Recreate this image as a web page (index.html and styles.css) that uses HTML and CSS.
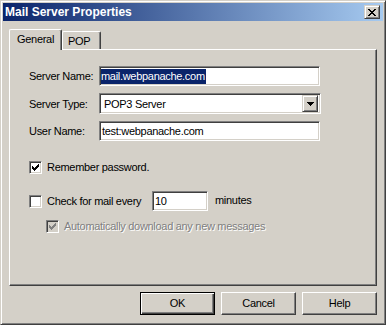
FILE: index.html
```html
<!DOCTYPE html>
<html lang="en">
<head>
  <meta charset="UTF-8">
  <title>Mail Server Properties</title>
  <link rel="stylesheet" href="styles.css">
</head>
<body>
  <div class="window">
    <div class="titlebar">
      <span class="title">Mail Server Properties</span>
      <div class="close-btn">
        <svg width="8" height="7" viewBox="0 0 8 7"><path d="M0 0h2v1h-2z M6 0h2v1h-2z M1 1h2v1h-2z M5 1h2v1h-2z M2 2h4v1h-4z M3 3h2v1h-2z M2 4h4v1h-4z M1 5h2v1h-2z M5 5h2v1h-2z M0 6h2v1h-2z M6 6h2v1h-2z" fill="#000"/></svg>
      </div>
    </div>

    <div class="dialog">
      <div class="tabs">
        <div class="tab active">General</div>
        <div class="tab">POP</div>
      </div>

      <div class="panel">
        <div class="fields">
          <span class="label">Server Name:</span>
          <div class="field"><span class="selected">mail.webpanache.com</span></div>

          <span class="label">Server Type:</span>
          <div class="field combo">
            <span class="combo-text">POP3 Server</span>
            <span class="drop-btn">
              <svg width="7" height="4" viewBox="0 0 7 4"><path d="M0 0h7v1h-7z M1 1h5v1h-5z M2 2h3v1h-3z M3 3h1v1h-1z" fill="#000"/></svg>
            </span>
          </div>

          <span class="label">User Name:</span>
          <div class="field">test:webpanache.com</div>
        </div>

        <div class="check-row remember">
          <span class="checkbox">
            <svg width="7" height="7" viewBox="0 0 7 7"><path d="M6 0h1v1h-1z M5 1h2v1h-2z M0 2h1v1h-1z M4 2h3v1h-3z M0 3h2v1h-2z M3 3h3v1h-3z M0 4h5v1h-5z M1 5h3v1h-3z M2 6h1v1h-1z" fill="#000"/></svg>
          </span>
          <span class="check-text">Remember password.</span>
        </div>

        <div class="check-row interval">
          <span class="checkbox"></span>
          <span class="check-text interval-label">Check for mail every</span>
          <div class="field minutes-field">10</div>
          <span class="unit">minutes</span>
        </div>

        <div class="check-row auto disabled">
          <span class="checkbox">
            <svg width="7" height="7" viewBox="0 0 7 7"><path d="M6 0h1v1h-1z M5 1h2v1h-2z M0 2h1v1h-1z M4 2h3v1h-3z M0 3h2v1h-2z M3 3h3v1h-3z M0 4h5v1h-5z M1 5h3v1h-3z M2 6h1v1h-1z" fill="#808080"/></svg>
          </span>
          <span class="check-text">Automatically download any new messages</span>
        </div>
      </div>

      <div class="buttons">
        <div class="btn default">OK</div>
        <div class="btn">Cancel</div>
        <div class="btn">Help</div>
      </div>
    </div>
  </div>
</body>
</html>
```

FILE: styles.css
```css
* {
  margin: 0;
  padding: 0;
  box-sizing: border-box;
}

body {
  font-family: "Liberation Sans", Arial, sans-serif;
  font-size: 11px;
  letter-spacing: -0.3px;
  color: #000;
  background: #d4d0c8;
}

.window {
  width: 386px;
  height: 325px;
  background: #d4d0c8;
  border: 1px solid;
  border-color: #d4d0c8 #404040 #404040 #d4d0c8;
  box-shadow: inset 1px 1px #fff, inset -1px -1px #808080;
  padding: 2px;
  display: flex;
  flex-direction: column;
}

/* title bar */
.titlebar {
  height: 18px;
  background: linear-gradient(to right, #0a246a, #a6caf0);
  display: flex;
  align-items: center;
  justify-content: space-between;
  padding: 0 3px 0 2px;
}

.title {
  color: #fff;
  font-weight: bold;
  font-size: 12px;
  letter-spacing: 0;
}

.close-btn {
  width: 16px;
  height: 14px;
  border: 1px solid;
  border-color: #d4d0c8 #404040 #404040 #d4d0c8;
  box-shadow: inset 1px 1px #fff, inset -1px -1px #808080;
  background: #d4d0c8;
  display: flex;
  align-items: center;
  justify-content: center;
}

.close-btn svg {
  display: block;
}

/* dialog body */
.dialog {
  flex: 1;
  padding: 8px 6px 0 6px;
  display: flex;
  flex-direction: column;
}

.tabs {
  display: flex;
  align-items: flex-end;
  height: 20px;
}

.tab {
  height: 18px;
  width: 39px;
  padding: 3px 0 0 5px;
  line-height: 13px;
  border-top: 1px solid #fff;
  border-left: 1px solid #fff;
  border-right: 1px solid #404040;
  box-shadow: inset -1px 0 #808080;
  border-radius: 2px 2px 0 0;
  background: #d4d0c8;
}

.tab.active {
  height: 21px;
  width: 53px;
  padding-left: 7px;
  margin-bottom: -1px;
  position: relative;
  z-index: 1;
}

.panel {
  height: 237px;
  border: 1px solid;
  border-color: #fff #404040 #404040 #fff;
  box-shadow: inset -1px -1px #808080;
  padding: 16px 0 0 19px;
}

.fields {
  display: grid;
  grid-template-columns: 70px 221px;
  row-gap: 7px;
  align-items: center;
}

.field {
  height: 20px;
  background: #fff;
  border: 1px solid;
  border-color: #808080 #fff #fff #808080;
  box-shadow: inset 1px 1px #404040, inset -1px -1px #d4d0c8;
  padding: 0 2px;
  line-height: 18px;
  white-space: nowrap;
}

.selected {
  background: #0a246a;
  color: #fff;
  display: inline-block;
  line-height: 15px;
  padding: 0 1px 0 0;
  margin-left: -1px;
}

.combo {
  width: 222px;
  height: 21px;
  display: flex;
  align-items: center;
  justify-content: space-between;
  padding: 0 2px 0 4px;
}

.drop-btn {
  width: 16px;
  height: 17px;
  border: 1px solid;
  border-color: #d4d0c8 #404040 #404040 #d4d0c8;
  box-shadow: inset 1px 1px #fff, inset -1px -1px #808080;
  background: #d4d0c8;
  display: flex;
  align-items: center;
  justify-content: center;
}

.drop-btn svg {
  display: block;
}

/* checkboxes */
.check-row {
  display: flex;
  align-items: center;
}

.checkbox {
  width: 13px;
  height: 13px;
  flex: none;
  background: #fff;
  border: 1px solid;
  border-color: #808080 #fff #fff #808080;
  box-shadow: inset 1px 1px #404040, inset -1px -1px #d4d0c8;
  display: flex;
  align-items: center;
  justify-content: center;
}

.checkbox svg {
  display: block;
}

.check-text {
  margin-left: 5px;
  line-height: 13px;
}

.remember {
  margin-top: 20px;
  height: 13px;
}

.interval {
  margin-top: 17px;
  height: 20px;
}

.interval-label {
  width: 100px;
}

.minutes-field {
  width: 56px;
  margin-left: 5px;
}

.unit {
  margin-left: 7px;
  margin-bottom: 2px;
}

.auto {
  margin-top: 9px;
  padding-left: 17px;
  height: 13px;
}

.disabled .checkbox {
  background: #d4d0c8;
}

.disabled .check-text {
  color: #808080;
  text-shadow: 1px 1px #fff;
}

/* buttons */
.buttons {
  display: flex;
  justify-content: flex-end;
  gap: 6px;
  margin-top: 6px;
}

.btn {
  width: 75px;
  height: 23px;
  border: 1px solid;
  border-color: #fff #404040 #404040 #fff;
  box-shadow: inset -1px -1px #808080;
  display: flex;
  align-items: center;
  justify-content: center;
  line-height: 13px;
}

.btn.default {
  border-color: #000;
  box-shadow: inset 1px 1px #fff, inset -1px -1px #404040, inset -2px -2px #808080;
}
```
